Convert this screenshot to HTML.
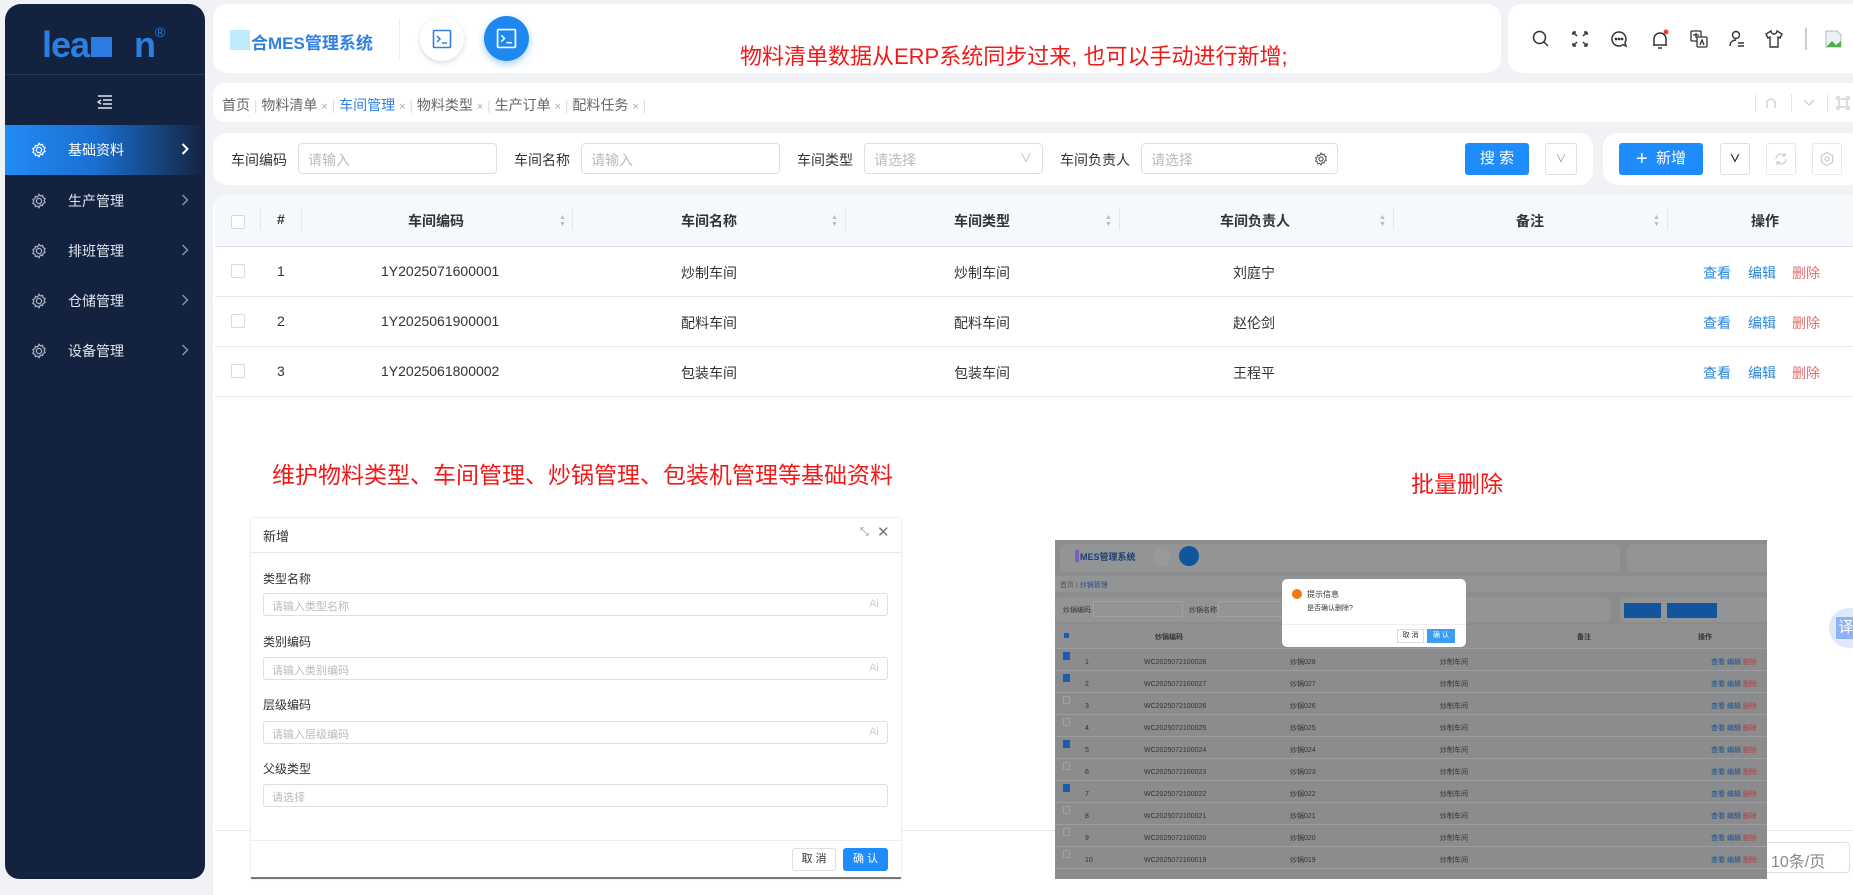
<!DOCTYPE html>
<html><head><meta charset="utf-8">
<style>
*{box-sizing:border-box;margin:0;padding:0}
body{width:1853px;height:879px;overflow:hidden;background:#f0f2f5;font-family:"Liberation Sans","Noto Sans CJK SC",sans-serif;font-size:14px;color:#333;position:relative}
.a{position:absolute}
.card{position:absolute;background:#fff;border-radius:14px}
.sb{left:5px;top:4px;width:200px;height:875px;background:#13233f;border-radius:16px 16px 14px 14px}
.mi{position:absolute;left:0;width:200px;height:50px;color:#dfe4ee;font-size:14px}
.mi .t{position:absolute;left:63px;top:15px}
.mi .g{position:absolute;left:26px;top:17px}
.mi .c{position:absolute;left:176px;top:17px}
.lbl{position:absolute;font-size:14px;color:#333;top:150px}
.inp{position:absolute;top:143px;height:31px;border:1px solid #dcdfe6;border-radius:4px;background:#fff;color:#bbb;font-size:14px;padding:6px 9px}
.th{position:absolute;top:211px;font-size:14px;font-weight:bold;color:#333}
.sort{position:absolute;top:214px;width:6px;font-size:7px;color:#bbb;line-height:7px}
.vs{position:absolute;top:208px;width:1px;height:22px;background:#e4e7ed}
.td{position:absolute;font-size:14px;color:#333}
.rl{position:absolute;left:215px;width:1638px;height:1px;background:#e6e8eb}
.cb{position:absolute;left:231px;width:14px;height:14px;border:1px solid #d6d9de;border-radius:2px;background:#fff}
.lk{position:absolute;font-size:14px}
.red{position:absolute;color:#f21818;font-family:"Liberation Sans","Noto Sans CJK SC",sans-serif}
.ml{position:absolute;left:263px;font-size:12px;color:#333}
.mi2{position:absolute;left:263px;width:625px;height:23px;border:1px solid #dcdfe6;border-radius:3px;font-size:11px;color:#bbb;padding:4px 8px}
.mi2 span{position:absolute;right:8px;top:4px;color:#ccc}
.ico{position:absolute;top:29px}
.mc{position:absolute;top:112px;line-height:22px;font-size:7px;color:#333}
</style></head><body>

<div class="a sb">
  <div class="a" style="left:37px;top:20px;font-size:36px;font-weight:bold;color:#2b7fe0;letter-spacing:-1px">lea<span style="display:inline-block;width:21px;height:20px;background:#2b7fe0;margin-left:2px;vertical-align:0"></span><span style="margin-left:22px">n</span></div>
  <div class="a" style="left:150px;top:20px;color:#2b7fe0;font-size:14px">®</div>
  <div class="a" style="left:0;top:70px;width:200px;height:1px;background:#26385a"></div>
  <svg class="a" style="left:92px;top:91px" width="16" height="14" viewBox="0 0 16 14"><path d="M1 1H15M6 5H15M6 9H15M1 13H15M4 5L1 7L4 9" stroke="#dfe4ee" stroke-width="1.4" fill="none"/></svg>
  <div class="a" style="left:0;top:121px;width:200px;height:1px;background:#26385a"></div>
  <div class="mi" style="top:121px;background:linear-gradient(90deg,#1f8cf5 0%,#1a6fd0 45%,#13233f 100%);color:#fff"><svg class="g" width="16" height="16" viewBox="0 0 16 16"><circle cx="8" cy="8" r="2.6" stroke="#fff" stroke-width="1.3" fill="none"/><path d="M8 1.2l1.4 1.8 2.2-.6.4 2.2 2.1.9-.9 2 .9 2-2.1.9-.4 2.2-2.2-.6L8 14.8l-1.4-1.8-2.2.6-.4-2.2-2.1-.9.9-2-.9-2 2.1-.9.4-2.2 2.2.6z" stroke="#fff" stroke-width="1.2" fill="none"/></svg><span class="t" style="color:#fff">基础资料</span><svg class="c" width="8" height="14" viewBox="0 0 8 14"><path d="M1.5 2l5 5-5 5" stroke="#fff" stroke-width="2" fill="none"/></svg></div>
  <div class="mi" style="top:172px"><svg class="g" width="16" height="16" viewBox="0 0 16 16"><circle cx="8" cy="8" r="2.6" stroke="#aab4c4" stroke-width="1.3" fill="none"/><path d="M8 1.2l1.4 1.8 2.2-.6.4 2.2 2.1.9-.9 2 .9 2-2.1.9-.4 2.2-2.2-.6L8 14.8l-1.4-1.8-2.2.6-.4-2.2-2.1-.9.9-2-.9-2 2.1-.9.4-2.2 2.2.6z" stroke="#aab4c4" stroke-width="1.2" fill="none"/></svg><span class="t">生产管理</span><svg class="c" width="8" height="14" viewBox="0 0 8 14"><path d="M1.5 2l5 5-5 5" stroke="#8390a6" stroke-width="1.5" fill="none"/></svg></div>
  <div class="mi" style="top:222px"><svg class="g" width="16" height="16" viewBox="0 0 16 16"><circle cx="8" cy="8" r="2.6" stroke="#aab4c4" stroke-width="1.3" fill="none"/><path d="M8 1.2l1.4 1.8 2.2-.6.4 2.2 2.1.9-.9 2 .9 2-2.1.9-.4 2.2-2.2-.6L8 14.8l-1.4-1.8-2.2.6-.4-2.2-2.1-.9.9-2-.9-2 2.1-.9.4-2.2 2.2.6z" stroke="#aab4c4" stroke-width="1.2" fill="none"/></svg><span class="t">排班管理</span><svg class="c" width="8" height="14" viewBox="0 0 8 14"><path d="M1.5 2l5 5-5 5" stroke="#8390a6" stroke-width="1.5" fill="none"/></svg></div>
  <div class="mi" style="top:272px"><svg class="g" width="16" height="16" viewBox="0 0 16 16"><circle cx="8" cy="8" r="2.6" stroke="#aab4c4" stroke-width="1.3" fill="none"/><path d="M8 1.2l1.4 1.8 2.2-.6.4 2.2 2.1.9-.9 2 .9 2-2.1.9-.4 2.2-2.2-.6L8 14.8l-1.4-1.8-2.2.6-.4-2.2-2.1-.9.9-2-.9-2 2.1-.9.4-2.2 2.2.6z" stroke="#aab4c4" stroke-width="1.2" fill="none"/></svg><span class="t">仓储管理</span><svg class="c" width="8" height="14" viewBox="0 0 8 14"><path d="M1.5 2l5 5-5 5" stroke="#8390a6" stroke-width="1.5" fill="none"/></svg></div>
  <div class="mi" style="top:322px"><svg class="g" width="16" height="16" viewBox="0 0 16 16"><circle cx="8" cy="8" r="2.6" stroke="#aab4c4" stroke-width="1.3" fill="none"/><path d="M8 1.2l1.4 1.8 2.2-.6.4 2.2 2.1.9-.9 2 .9 2-2.1.9-.4 2.2-2.2-.6L8 14.8l-1.4-1.8-2.2.6-.4-2.2-2.1-.9.9-2-.9-2 2.1-.9.4-2.2 2.2.6z" stroke="#aab4c4" stroke-width="1.2" fill="none"/></svg><span class="t">设备管理</span><svg class="c" width="8" height="14" viewBox="0 0 8 14"><path d="M1.5 2l5 5-5 5" stroke="#8390a6" stroke-width="1.5" fill="none"/></svg></div>
</div>

<div class="card" style="left:213px;top:4px;width:1288px;height:69px"></div>
<div class="a" style="left:230px;top:30px;width:20px;height:20px;background:#bfeafc"></div>
<div class="a" style="left:251px;top:29px;font-size:17px;font-weight:bold;color:#2f80e0">合MES管理系统</div>
<div class="a" style="left:399px;top:18px;width:1px;height:42px;background:#eceef2"></div>
<div class="a" style="left:420px;top:17px;width:44px;height:44px;border-radius:50%;background:#fff;box-shadow:0 2px 6px rgba(0,0,0,.15)"></div>
<svg class="a" style="left:432px;top:29px" width="20" height="20" viewBox="0 0 20 20"><rect x="1.5" y="1.5" width="17" height="17" rx="1" stroke="#2f80e0" stroke-width="1.6" fill="none"/><path d="M5 7l3 3-3 3M10 14h5" stroke="#2f80e0" stroke-width="1.5" fill="none"/></svg>
<div class="a" style="left:484px;top:16px;width:45px;height:45px;border-radius:50%;background:#1e88f0;box-shadow:0 3px 8px rgba(30,136,240,.4)"></div>
<svg class="a" style="left:496px;top:28px" width="21" height="21" viewBox="0 0 20 20"><rect x="1.5" y="1.5" width="17" height="17" rx="1" stroke="#fff" stroke-width="1.6" fill="none"/><path d="M5 7l3 3-3 3M10 14h5" stroke="#fff" stroke-width="1.5" fill="none"/></svg>
<div class="red" style="left:740px;top:39px;font-size:22px;white-space:nowrap">物料清单数据从ERP系统同步过来, 也可以手动进行新增;</div>

<div class="card" style="left:1508px;top:4px;width:360px;height:69px"></div>
<svg class="ico" style="left:1531px" width="20" height="20" viewBox="0 0 20 20" fill="none" stroke="#333" stroke-width="1.5"><circle cx="8.5" cy="8.5" r="6"/><path d="M13 13l4 4"/></svg>
<svg class="ico" style="left:1570px" width="20" height="20" viewBox="0 0 20 20" fill="none" stroke="#333" stroke-width="1.5"><path d="M3 3l4 4M3 3v3M3 3h3M17 3l-4 4M17 3v3M17 3h-3M3 17l4-4M3 17v-3M3 17h3M17 17l-4-4M17 17v-3M17 17h-3"/></svg>
<svg class="ico" style="left:1609px" width="20" height="20" viewBox="0 0 20 20" fill="none" stroke="#333" stroke-width="1.5"><path d="M10 3a7 7 0 1 0 4 12.7L17 17l-1-3.5A7 7 0 0 0 10 3z"/><circle cx="7" cy="10" r=".6" fill="#333"/><circle cx="10" cy="10" r=".6" fill="#333"/><circle cx="13" cy="10" r=".6" fill="#333"/></svg>
<svg class="ico" style="left:1650px" width="20" height="22" viewBox="0 0 20 22" fill="none" stroke="#333" stroke-width="1.5"><path d="M4 16V10a6 6 0 0 1 12 0v6H3h14M8 19h4"/><circle cx="16" cy="3" r="2.5" fill="#f03c3c" stroke="none"/></svg>
<svg class="ico" style="left:1689px" width="20" height="20" viewBox="0 0 20 20" fill="none" stroke="#333" stroke-width="1.3"><rect x="2" y="2" width="10" height="10" rx="1"/><rect x="8" y="8" width="10" height="10" rx="1" fill="#fff"/><path d="M4 6h6M7 4v5M11 16l2-5 2 5"/></svg>
<svg class="ico" style="left:1727px" width="20" height="20" viewBox="0 0 20 20" fill="none" stroke="#333" stroke-width="1.4"><circle cx="9" cy="6" r="3.5"/><path d="M3 17c0-4 3-6 6-6M11 14h6M11 17h6"/></svg>
<svg class="ico" style="left:1764px" width="20" height="20" viewBox="0 0 20 20" fill="none" stroke="#333" stroke-width="1.4"><path d="M7 2L2 5l2 4 2-1v10h8V8l2 1 2-4-5-3c0 2-1.5 3-3 3S7 4 7 2z"/></svg>
<div class="a" style="left:1805px;top:28px;width:2px;height:22px;background:#ccc"></div>
<svg class="a" style="left:1825px;top:30px" width="18" height="18" viewBox="0 0 18 18"><path d="M1 1h11l4 4v12H1z" fill="#eaf2f8" stroke="#bbb"/><path d="M1 17l6-6 4 4 5-4v6z" fill="#4caf50"/></svg>

<div class="card" style="left:213px;top:83px;width:1650px;height:39px;border-radius:12px"></div>
<div class="a" style="left:222px;top:95px;font-size:14px;color:#666;white-space:nowrap">首页<span style="color:#ddd"> | </span>物料清单 <span style="font-size:11px;color:#aaa">×</span><span style="color:#ddd"> | </span><span style="color:#2f80e0">车间管理</span> <span style="font-size:11px;color:#aaa">×</span><span style="color:#ddd"> | </span>物料类型 <span style="font-size:11px;color:#aaa">×</span><span style="color:#ddd"> | </span>生产订单 <span style="font-size:11px;color:#aaa">×</span><span style="color:#ddd"> | </span>配料任务 <span style="font-size:11px;color:#aaa">×</span><span style="color:#ddd"> |</span></div>
<div class="a" style="left:1755px;top:94px;width:1px;height:18px;background:#e5e5e5"></div>
<svg class="a" style="left:1764px;top:96px" width="14" height="14" viewBox="0 0 14 14" fill="none" stroke="#ccc" stroke-width="1.3"><path d="M3 12V7a4 4 0 0 1 8 0v5"/></svg>
<div class="a" style="left:1791px;top:94px;width:1px;height:18px;background:#e5e5e5"></div>
<svg class="a" style="left:1802px;top:98px" width="14" height="10" viewBox="0 0 14 10" fill="none" stroke="#ccc" stroke-width="1.3"><path d="M2 2l5 5 5-5"/></svg>
<div class="a" style="left:1827px;top:94px;width:1px;height:18px;background:#e5e5e5"></div>
<svg class="a" style="left:1836px;top:96px" width="14" height="14" viewBox="0 0 14 14" fill="none" stroke="#ccc" stroke-width="1.3"><rect x="3" y="3" width="8" height="8"/><path d="M1 4V1h3M10 1h3v3M13 10v3h-3M4 13H1v-3"/></svg>

<div class="card" style="left:213px;top:133px;width:1380px;height:52px"></div>
<div class="card" style="left:1603px;top:133px;width:260px;height:52px"></div>
<div class="lbl" style="left:231px">车间编码</div><div class="inp" style="left:298px;width:199px">请输入</div>
<div class="lbl" style="left:514px">车间名称</div><div class="inp" style="left:581px;width:199px">请输入</div>
<div class="lbl" style="left:797px">车间类型</div><div class="inp" style="left:864px;width:179px">请选择<span class="a" style="right:10px;top:5px;color:#bbb;font-size:12px">∨</span></div>
<div class="lbl" style="left:1060px">车间负责人</div><div class="inp" style="left:1141px;width:197px">请选择
<svg class="a" style="right:9px;top:8px" width="14" height="14" viewBox="0 0 16 16"><circle cx="8" cy="8" r="2.4" stroke="#555" stroke-width="1.3" fill="none"/><path d="M8 1.2l1.4 1.8 2.2-.6.4 2.2 2.1.9-.9 2 .9 2-2.1.9-.4 2.2-2.2-.6L8 14.8l-1.4-1.8-2.2.6-.4-2.2-2.1-.9.9-2-.9-2 2.1-.9.4-2.2 2.2.6z" stroke="#555" stroke-width="1.2" fill="none"/></svg></div>
<div class="a" style="left:1465px;top:143px;width:64px;height:32px;background:#1e8cfa;border-radius:3px;color:#fff;font-size:15px;text-align:center;line-height:32px">搜 索</div>
<div class="a" style="left:1545px;top:143px;width:32px;height:32px;border:1px solid #dcdfe6;border-radius:3px;color:#999;text-align:center;line-height:30px;font-size:11px">∨</div>
<div class="a" style="left:1619px;top:143px;width:84px;height:32px;background:#1e8cfa;border-radius:3px;color:#fff;font-size:15px;text-align:center;line-height:32px"><span style="font-size:20px;vertical-align:-2px">+</span>&nbsp; 新增</div>
<div class="a" style="left:1720px;top:143px;width:30px;height:32px;border:1px solid #dcdfe6;border-radius:3px;color:#222;text-align:center;line-height:30px;font-size:11px;font-weight:bold">∨</div>
<div class="a" style="left:1766px;top:143px;width:30px;height:32px;border:1px solid #e4e7ed;border-radius:3px"></div>
<svg class="a" style="left:1773px;top:151px" width="16" height="16" viewBox="0 0 16 16" fill="none" stroke="#ccc" stroke-width="1.2"><path d="M13 8a5 5 0 0 1-9 3M3 8a5 5 0 0 1 9-3M12 2v3h-3M4 14v-3h3"/></svg>
<div class="a" style="left:1812px;top:143px;width:30px;height:32px;border:1px solid #e4e7ed;border-radius:3px"></div>
<svg class="a" style="left:1819px;top:151px" width="16" height="16" viewBox="0 0 16 16" fill="none" stroke="#ccc" stroke-width="1.2"><path d="M8 1.5l5.6 3.2v6.6L8 14.5l-5.6-3.2V4.7z"/><circle cx="8" cy="8" r="2"/></svg>

<div class="card" style="left:213px;top:195px;width:1650px;height:700px;border-radius:14px 14px 0 0"></div>
<div class="a" style="left:215px;top:195px;width:1638px;height:51px;background:#f5f8fc;border-radius:12px 0 0 0"></div>
<div class="rl" style="top:246px;background:#dfe3e8"></div>
<div class="cb" style="top:215px"></div>
<div class="vs" style="left:260px"></div>
<div class="th" style="left:277px">#</div>
<div class="vs" style="left:301px"></div>
<div class="th" style="left:408px">车间编码</div><div class="sort" style="left:559px">▲<br>▼</div><div class="vs" style="left:572px"></div>
<div class="th" style="left:681px">车间名称</div><div class="sort" style="left:831px">▲<br>▼</div><div class="vs" style="left:845px"></div>
<div class="th" style="left:954px">车间类型</div><div class="sort" style="left:1105px">▲<br>▼</div><div class="vs" style="left:1119px"></div>
<div class="th" style="left:1220px">车间负责人</div><div class="sort" style="left:1379px">▲<br>▼</div><div class="vs" style="left:1393px"></div>
<div class="th" style="left:1516px">备注</div><div class="sort" style="left:1653px">▲<br>▼</div><div class="vs" style="left:1667px"></div>
<div class="th" style="left:1751px">操作</div>

<div class="cb" style="top:264px"></div><div class="td" style="left:277px;top:263px">1</div><div class="td" style="left:381px;top:263px">1Y2025071600001</div><div class="td" style="left:681px;top:263px">炒制车间</div><div class="td" style="left:954px;top:263px">炒制车间</div><div class="td" style="left:1233px;top:263px">刘庭宁</div>
<div class="lk" style="left:1703px;top:263px;color:#2b86d8">查看</div><div class="lk" style="left:1748px;top:263px;color:#2b86d8">编辑</div><div class="lk" style="left:1792px;top:263px;color:#e07070">删除</div>
<div class="rl" style="top:296px"></div>
<div class="cb" style="top:314px"></div><div class="td" style="left:277px;top:313px">2</div><div class="td" style="left:381px;top:313px">1Y2025061900001</div><div class="td" style="left:681px;top:313px">配料车间</div><div class="td" style="left:954px;top:313px">配料车间</div><div class="td" style="left:1233px;top:313px">赵伦剑</div>
<div class="lk" style="left:1703px;top:313px;color:#2b86d8">查看</div><div class="lk" style="left:1748px;top:313px;color:#2b86d8">编辑</div><div class="lk" style="left:1792px;top:313px;color:#e07070">删除</div>
<div class="rl" style="top:346px"></div>
<div class="cb" style="top:364px"></div><div class="td" style="left:277px;top:363px">3</div><div class="td" style="left:381px;top:363px">1Y2025061800002</div><div class="td" style="left:681px;top:363px">包装车间</div><div class="td" style="left:954px;top:363px">包装车间</div><div class="td" style="left:1233px;top:363px">王程平</div>
<div class="lk" style="left:1703px;top:363px;color:#2b86d8">查看</div><div class="lk" style="left:1748px;top:363px;color:#2b86d8">编辑</div><div class="lk" style="left:1792px;top:363px;color:#e07070">删除</div>
<div class="rl" style="top:396px"></div>

<div class="rl" style="top:830px;background:#e8eaee"></div>
<div class="a" style="left:1760px;top:842px;width:90px;height:31px;border:1px solid #dcdfe6;border-radius:4px;background:#fff;color:#888;font-size:16px;padding:5px 8px 0 10px">10条/页</div>

<div class="red" style="left:272px;top:456px;font-size:23px;white-space:nowrap">维护物料类型、车间管理、炒锅管理、包装机管理等基础资料</div>
<div class="red" style="left:1411px;top:465px;font-size:23px">批量删除</div>

<div class="a" style="left:251px;top:518px;width:650px;height:361px;background:#fff;border-bottom:2px solid #777;box-shadow:0 0 2px rgba(0,0,0,.2)"></div>
<div class="a" style="left:263px;top:526px;font-size:13px;color:#333">新增</div>
<div class="a" style="left:860px;top:526px;font-size:11px;color:#888">⤡</div>
<div class="a" style="left:877px;top:523px;font-size:15px;color:#777">✕</div>
<div class="a" style="left:251px;top:552px;width:650px;height:1px;background:#e8e8e8"></div>
<div class="ml" style="top:570px">类型名称</div><div class="mi2" style="top:593px">请输入类型名称<span>Ai</span></div>
<div class="ml" style="top:633px">类别编码</div><div class="mi2" style="top:657px">请输入类别编码<span>Ai</span></div>
<div class="ml" style="top:696px">层级编码</div><div class="mi2" style="top:721px">请输入层级编码<span>Ai</span></div>
<div class="ml" style="top:760px">父级类型</div><div class="mi2" style="top:784px">请选择</div>
<div class="a" style="left:251px;top:840px;width:650px;height:1px;background:#eee"></div>
<div class="a" style="left:792px;top:848px;width:44px;height:23px;border:1px solid #dcdfe6;border-radius:3px;font-size:11px;text-align:center;line-height:21px;color:#333">取 消</div>
<div class="a" style="left:843px;top:848px;width:45px;height:23px;background:#1e8cfa;border-radius:3px;font-size:11px;text-align:center;line-height:23px;color:#fff">确 认</div>

<div class="a" style="left:1055px;top:540px;width:712px;height:339px;background:#8b8c8e;overflow:hidden;font-size:8px;color:#333">
  <div class="a" style="left:5px;top:4px;width:560px;height:28px;background:#939496;border-radius:6px"></div>
  <div class="a" style="left:20px;top:10px;width:4px;height:12px;background:#7a5fc0"></div>
  <div class="a" style="left:25px;top:10px;color:#1d3f72;font-size:9px;font-weight:bold">MES管理系统</div>
  <div class="a" style="left:98px;top:8px;width:18px;height:18px;border-radius:50%;background:#999"></div>
  <div class="a" style="left:124px;top:6px;width:20px;height:20px;border-radius:50%;background:#12559c"></div>
  <div class="a" style="left:572px;top:4px;width:150px;height:28px;background:#939496;border-radius:6px"></div>
  <div class="a" style="left:0;top:36px;width:720px;height:16px;background:#939496"></div>
  <div class="a" style="left:5px;top:40px;font-size:7px;color:#555">首页 | <span style="color:#1d4f8c">炒锅管理</span></div>
  <div class="a" style="left:0;top:57px;width:555px;height:25px;background:#939496;border-radius:5px"></div>
  <div class="a" style="left:8px;top:65px;font-size:7px">炒锅编码</div>
  <div class="a" style="left:38px;top:61px;width:90px;height:16px;border:1px solid #a0a1a3"></div>
  <div class="a" style="left:134px;top:65px;font-size:7px">炒锅名称</div>
  <div class="a" style="left:163px;top:61px;width:90px;height:16px;border:1px solid #a0a1a3"></div>
  <div class="a" style="left:565px;top:57px;width:160px;height:25px;background:#939496;border-radius:5px"></div>
  <div class="a" style="left:310px;top:63px;width:28px;height:15px;background:#12559c"></div>
  <div class="a" style="left:569px;top:63px;width:37px;height:15px;background:#12559c"></div>
  <div class="a" style="left:612px;top:63px;width:50px;height:15px;background:#12559c"></div>
  <div class="a" style="left:0;top:85px;width:719px;height:23px;background:#8f9092"></div>
  <div class="a" style="left:100px;top:92px;font-size:7px;font-weight:bold">炒锅编码</div>
  <div class="a" style="left:522px;top:92px;font-size:7px;font-weight:bold">备注</div>
  <div class="a" style="left:643px;top:92px;font-size:7px;font-weight:bold">操作</div>
  <div class="a" style="left:0;top:108px;width:719px;height:1px;background:#9c9d9f"></div>
  <div class="a" style="left:0;top:130px;width:719px;height:1px;background:#9c9d9f"></div>
  <div class="a" style="left:0;top:152px;width:719px;height:1px;background:#9c9d9f"></div>
  <div class="a" style="left:0;top:174px;width:719px;height:1px;background:#9c9d9f"></div>
  <div class="a" style="left:0;top:196px;width:719px;height:1px;background:#9c9d9f"></div>
  <div class="a" style="left:0;top:218px;width:719px;height:1px;background:#9c9d9f"></div>
  <div class="a" style="left:0;top:240px;width:719px;height:1px;background:#9c9d9f"></div>
  <div class="a" style="left:0;top:262px;width:719px;height:1px;background:#9c9d9f"></div>
  <div class="a" style="left:0;top:284px;width:719px;height:1px;background:#9c9d9f"></div>
  <div class="a" style="left:0;top:306px;width:719px;height:1px;background:#9c9d9f"></div>
  <div class="a" style="left:0;top:328px;width:719px;height:1px;background:#9c9d9f"></div>
  <div class="a" style="left:9px;top:93px;width:5px;height:5px;background:#1a5db0"></div>
  <div class="a" style="left:8px;top:112px;width:7px;height:8px;background:#1a5db0"></div>
  <div class="a" style="left:8px;top:134px;width:7px;height:8px;background:#1a5db0"></div>
  <div class="a" style="left:8px;top:156px;width:7px;height:8px;border:1px solid #a0a1a3"></div>
  <div class="a" style="left:8px;top:178px;width:7px;height:8px;border:1px solid #a0a1a3"></div>
  <div class="a" style="left:8px;top:200px;width:7px;height:8px;background:#1a5db0"></div>
  <div class="a" style="left:8px;top:222px;width:7px;height:8px;border:1px solid #a0a1a3"></div>
  <div class="a" style="left:8px;top:244px;width:7px;height:8px;background:#1a5db0"></div>
  <div class="a" style="left:8px;top:266px;width:7px;height:8px;border:1px solid #a0a1a3"></div>
  <div class="a" style="left:8px;top:288px;width:7px;height:8px;border:1px solid #a0a1a3"></div>
  <div class="a" style="left:8px;top:310px;width:7px;height:8px;border:1px solid #a0a1a3"></div>
  <div class="mc" style="left:30px">1<br>2<br>3<br>4<br>5<br>6<br>7<br>8<br>9<br>10</div>
  <div class="mc" style="left:89px">WC2025072100028<br>WC2025072100027<br>WC2025072100026<br>WC2025072100025<br>WC2025072100024<br>WC2025072100023<br>WC2025072100022<br>WC2025072100021<br>WC2025072100020<br>WC2025072100019</div>
  <div class="mc" style="left:235px">炒锅028<br>炒锅027<br>炒锅026<br>炒锅025<br>炒锅024<br>炒锅023<br>炒锅022<br>炒锅021<br>炒锅020<br>炒锅019</div>
  <div class="mc" style="left:385px">炒制车间<br>炒制车间<br>炒制车间<br>炒制车间<br>炒制车间<br>炒制车间<br>炒制车间<br>炒制车间<br>炒制车间<br>炒制车间</div>
  <div class="mc" style="left:656px;color:#1a4f8c">查看 编辑 <span style="color:#b04040">删除</span><br>查看 编辑 <span style="color:#b04040">删除</span><br>查看 编辑 <span style="color:#b04040">删除</span><br>查看 编辑 <span style="color:#b04040">删除</span><br>查看 编辑 <span style="color:#b04040">删除</span><br>查看 编辑 <span style="color:#b04040">删除</span><br>查看 编辑 <span style="color:#b04040">删除</span><br>查看 编辑 <span style="color:#b04040">删除</span><br>查看 编辑 <span style="color:#b04040">删除</span><br>查看 编辑 <span style="color:#b04040">删除</span></div>
  <div class="a" style="left:227px;top:39px;width:184px;height:68px;background:#fff;border-radius:5px"></div>
  <div class="a" style="left:237px;top:49px;width:10px;height:10px;border-radius:50%;background:#f37a12"></div>
  <div class="a" style="left:252px;top:49px;font-size:8px">提示信息</div>
  <div class="a" style="left:252px;top:63px;font-size:7px">是否确认删除?</div>
  <div class="a" style="left:227px;top:84px;width:184px;height:1px;background:#eee"></div>
  <div class="a" style="left:342px;top:89px;width:27px;height:14px;border:1px solid #ddd;font-size:7px;text-align:center;line-height:12px">取 消</div>
  <div class="a" style="left:372px;top:89px;width:28px;height:14px;background:#3d9df5;color:#fff;font-size:7px;text-align:center;line-height:14px">确 认</div>
</div>
<div class="a" style="left:1829px;top:608px;width:30px;height:40px;border-radius:20px 0 0 20px;background:#dfe7fb"></div>
<div class="a" style="left:1836px;top:617px;width:20px;height:22px;background:#8fb2f2;color:#fff;font-size:15px;line-height:22px;text-align:center">译</div>
</body></html>
